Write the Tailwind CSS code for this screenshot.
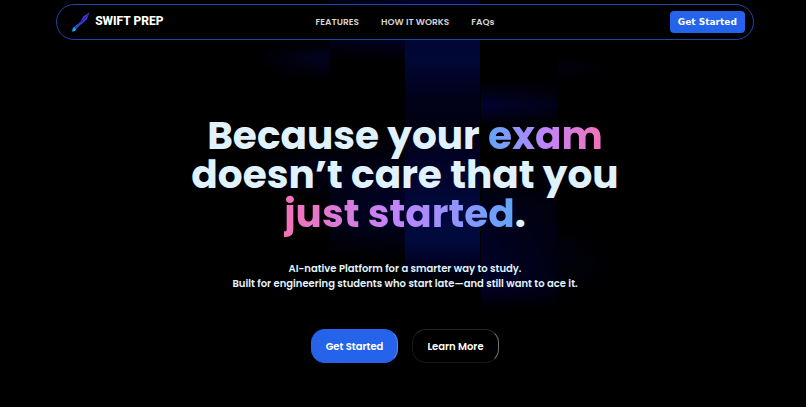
<!DOCTYPE html>
<html lang="en">
<head>
    <meta charset="UTF-8" />
    <meta name="viewport" content="width=device-width, initial-scale=1.0" />
    <title>Swift Prep</title>
    <script src="https://cdn.jsdelivr.net/npm/@tailwindcss/browser@4"></script>
</head>
<body class="relative min-h-screen bg-black pl-1 pt-1 font-['Poppins','Inter',sans-serif] text-white overflow-x-hidden">

    <!-- Background beams -->
    <div class="absolute inset-0 pl-1 flex justify-center pointer-events-none" aria-hidden="true">
        <div class="w-19"></div>
        <div class="w-19 h-[407px] bg-[linear-gradient(to_right,#000_0%,transparent_90%),linear-gradient(to_bottom,#000_40px,#020220_58px,#000_82px,#000_145px,#010118_165px,#000_205px)]"></div>
        <div class="w-19 h-[407px] bg-[linear-gradient(to_right,#0006,transparent),linear-gradient(to_bottom,#010122_0px,#010122_40px,#000_62px,#000_135px,#010222_180px,#010226_215px,#000_262px)]"></div>
        <div class="w-[75px] h-[407px] bg-[linear-gradient(to_bottom,#01012a_0px,#010836_58px,#01011c_95px,#010112_125px,#010124_155px,#01083a_205px,#010a3e_240px,#010224_262px,#000_285px)]"></div>
        <div class="w-19 ml-px h-[407px] bg-[linear-gradient(to_right,transparent,#0008),linear-gradient(to_bottom,#000_80px,#020232_106px,#000_128px,#000_165px,#01011e_210px,#01012c_285px,#000_310px)]"></div>
        <div class="w-19 h-[407px] bg-[linear-gradient(to_right,transparent,#000_80%),linear-gradient(to_bottom,#000_55px,#01010f_68px,#000_80px,#000_220px,#01010f_260px,#000_305px)]"></div>
    </div>

    <!-- Navbar -->
    <header class="relative mx-auto w-[87%] h-9 pl-3.5 pr-2 flex items-center justify-between rounded-full border border-[#1c48ab] bg-black">
        <a href="#" class="flex items-center gap-1">
            <svg class="w-5 h-5" viewBox="0 0 20 20" fill="none" aria-hidden="true">
                <defs>
                    <linearGradient id="pen" x1="19" y1="1" x2="1" y2="19" gradientUnits="userSpaceOnUse">
                        <stop offset="0" stop-color="#6a3fd0" />
                        <stop offset=".3" stop-color="#4332e8" />
                        <stop offset=".7" stop-color="#1d4fd8" />
                        <stop offset="1" stop-color="#18b4e8" />
                    </linearGradient>
                </defs>
                <path d="M18.5 .5 L12.2 4.6 L9.6 9.4 L6 13 L7.4 14.6 L11.6 11.2 L15.6 7.6 Z" fill="url(#pen)" />
                <path d="M6.6 12 L3.4 14.8 L5.4 17 L8.4 13.8 Z" fill="#1f4fc4" />
                <path d="M3.2 14.8 Q1.2 16 1 19.5 L2.6 19.6 Q4.8 19 5.2 17 Z" fill="#1ba3ea" />
                <path d="M17.4 2 L9.6 10.6" stroke="#0c0c5c" stroke-width=".7" />
            </svg>
            <span class="font-[Roboto] font-extrabold text-xs leading-none pb-0.5">SWIFT PREP</span>
        </a>
        <nav class="absolute left-1/2 -translate-x-1/2 flex gap-5.5 pt-px whitespace-nowrap text-[9px] font-semibold text-neutral-300">
            <a href="#features">FEATURES</a>
            <a href="#how">HOW IT WORKS</a>
            <a href="#faqs">FAQs</a>
        </nav>
        <button type="button" class="h-5.5 px-2 pt-0.5 rounded bg-[#2563eb] font-['DejaVu_Sans'] font-bold text-[9px] whitespace-nowrap">Get Started</button>
    </header>

    <!-- Hero -->
    <main class="relative flex flex-col items-center text-center pt-19">
        <h1 class="text-[39px] leading-[39px] font-bold text-[#e0f2fe]">
            Because your <span class="bg-linear-to-r/srgb from-[#60a5fa] via-[#c084fc] to-[#f472b6] bg-clip-text text-transparent">exam</span><br />
            doesn’t care that you<br />
            <span class="bg-linear-to-l/srgb from-[#60a5fa] via-[#c084fc] to-[#f472b6] bg-clip-text text-transparent">just started</span>.
        </h1>
        <p class="mt-7 text-[10px] leading-[15px] font-semibold text-[#e0f2fe]">
            AI-native Platform for a smarter way to study.<br />
            Built for engineering students who start late—and still want to ace it.
        </p>
        <div class="mt-[38px] flex gap-3.5 text-[10px] font-semibold">
            <button type="button" class="w-[87px] h-[34px] rounded-[14px] border border-[#2563eb] border-r-[#5b8af0] bg-[#2563eb]">Get Started</button>
            <button type="button" class="w-[87px] h-[34px] rounded-[14px] border border-neutral-900 border-t-neutral-800 border-r-neutral-500 bg-black">Learn More</button>
        </div>
    </main>
</body>
</html>
